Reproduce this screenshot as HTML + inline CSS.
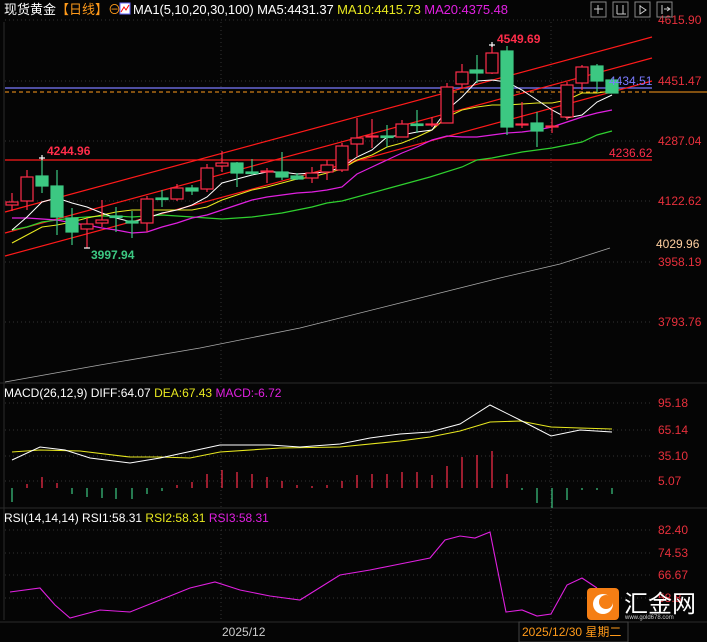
<!DOCTYPE html>
<html><head><meta charset="utf-8"><style>
body{margin:0;background:#000;width:707px;height:642px;overflow:hidden;font-family:"Liberation Sans","Noto Sans CJK SC",sans-serif}
svg{display:block}
text{font-family:"Liberation Sans","Noto Sans CJK SC",sans-serif}
</style></head><body>
<svg width="707" height="642" viewBox="0 0 707 642" xmlns="http://www.w3.org/2000/svg">
<rect width="707" height="642" fill="#050505"/>
<g stroke="#333" stroke-dasharray="1,3" stroke-width="1">
<line x1="5" y1="20" x2="652" y2="20"/><line x1="5" y1="81" x2="652" y2="81"/><line x1="5" y1="141" x2="652" y2="141"/><line x1="5" y1="201" x2="652" y2="201"/><line x1="5" y1="262" x2="652" y2="262"/><line x1="5" y1="322" x2="652" y2="322"/>
<line x1="5" y1="403" x2="652" y2="403"/><line x1="5" y1="430" x2="652" y2="430"/><line x1="5" y1="456" x2="652" y2="456"/><line x1="5" y1="481" x2="652" y2="481"/>
<line x1="5" y1="530" x2="652" y2="530"/><line x1="5" y1="553" x2="652" y2="553"/><line x1="5" y1="575" x2="652" y2="575"/><line x1="5" y1="598" x2="652" y2="598"/>
<line x1="221" y1="22" x2="221" y2="620"/><line x1="551" y1="22" x2="551" y2="620"/>
</g>
<g stroke="#2a2a2a"><line x1="0" y1="383" x2="707" y2="383"/><line x1="0" y1="508" x2="707" y2="508"/><line x1="0" y1="622" x2="707" y2="622"/><line x1="4" y1="22" x2="4" y2="620"/></g>
<line x1="5" y1="160" x2="652" y2="160" stroke="#ff1a1a" stroke-width="1.2"/>
<line x1="5" y1="88" x2="652" y2="88" stroke="#7a7aff" stroke-width="1.2"/>
<line x1="5" y1="92" x2="652" y2="92" stroke="#ff9a1a" stroke-dasharray="4,3"/>
<line x1="652" y1="92" x2="707" y2="92" stroke="#ff9a1a"/>
<g stroke="#ff1a1a" stroke-width="1.2">
<line x1="5" y1="212" x2="652" y2="37"/><line x1="5" y1="233" x2="652" y2="58"/><line x1="5" y1="256" x2="652" y2="81"/>
</g>
<polyline fill="none" stroke="#aaa" stroke-width="0.8" points="5,382 100,365 200,348 300,328 400,303 500,278 560,264 610,248"/>
<polyline fill="none" stroke="#2fd02f" stroke-width="1.2" points="12,230 27,227 42,222 57,220 72,218 87,217 102,216 116,216 132,217 147,216 162,215 177,216 192,217 207,218 222,219 237,218 252,217 267,215 282,213 297,210 312,207 327,203 342,201 386,189 430,177 462,167 477,160 492,158 507,155 522,152 537,150 552,148 567,145 582,142 597,135 612,131"/>
<polyline fill="none" stroke="#e020e0" stroke-width="1.2" points="12,218 27,218 42,219 57,220 72,223 87,225 102,228 116,230 132,233 147,232 162,227 177,223 192,218 207,215 222,210 237,205 252,200 267,197 282,195 297,193 312,192 327,190 342,187 357,174 372,167 387,160 402,153 417,147 432,140 447,136 462,137 477,137 492,135 507,133 522,132 537,130 552,127 567,122 582,117 597,113 612,110"/>
<polyline fill="none" stroke="#e8e820" stroke-width="1.1" points="12,243 27,235 42,227 57,225 72,222 87,218 102,215 116,212 132,210 147,210 162,210 177,210 192,210 207,207 222,200 237,195 252,190 267,187 282,183 297,179 312,177 327,173 342,169 357,160 372,155 387,147 402,143 417,137 432,130 447,117 462,110 477,107 492,105 507,105 522,104 537,103 552,103 567,100 582,93 597,93 612,91"/>
<polyline fill="none" stroke="#fff" stroke-width="1" points="12,230 27,217 42,202 57,198 72,203 87,207 102,213 116,218 132,222 147,218 162,213 177,210 192,205 207,197 222,183 237,179 252,175 267,172 282,172 297,174 312,173 327,172 342,167 357,157 372,150 387,137 402,135 417,132 432,130 447,110 462,97 477,81 492,80 507,82 522,90 537,100 552,110 567,118 582,115 597,102 612,95"/>
<g stroke-width="1.2">
<g stroke="#ff2d4a" fill="#050505">
<line x1="12" y1="193" x2="12" y2="211"/><rect x="6" y="202" width="12" height="3"/>
<line x1="27" y1="170" x2="27" y2="210"/><rect x="21" y="177" width="12" height="24"/>
<line x1="87" y1="218" x2="87" y2="248"/><rect x="81" y="224" width="12" height="5"/>
<line x1="102" y1="200" x2="102" y2="227"/><rect x="96" y="220" width="12" height="3"/>
<line x1="147" y1="196" x2="147" y2="232"/><rect x="141" y="199" width="12" height="24"/>
<line x1="177" y1="184" x2="177" y2="201"/><rect x="171" y="188" width="12" height="11"/>
<line x1="207" y1="164" x2="207" y2="192"/><rect x="201" y="168" width="12" height="21"/>
<line x1="222" y1="151" x2="222" y2="172"/><rect x="216" y="163" width="12" height="3"/>
<line x1="267" y1="168" x2="267" y2="183"/><rect x="261" y="171" width="12" height="1"/>
<line x1="312" y1="167" x2="312" y2="183"/><rect x="306" y="173" width="12" height="5"/>
<line x1="327" y1="160" x2="327" y2="180"/><rect x="321" y="165" width="12" height="7"/>
<line x1="342" y1="143" x2="342" y2="172"/><rect x="336" y="146" width="12" height="24"/>
<line x1="357" y1="118" x2="357" y2="157"/><rect x="351" y="138" width="12" height="6"/>
<line x1="372" y1="119" x2="372" y2="148"/><rect x="366" y="136" width="12" height="1"/>
<line x1="402" y1="120" x2="402" y2="137"/><rect x="396" y="124" width="12" height="13"/>
<line x1="432" y1="117" x2="432" y2="127"/><rect x="426" y="124" width="12" height="1"/>
<line x1="447" y1="83" x2="447" y2="123"/><rect x="441" y="87" width="12" height="36"/>
<line x1="462" y1="64" x2="462" y2="88"/><rect x="456" y="72" width="12" height="12"/>
<line x1="492" y1="45" x2="492" y2="74"/><rect x="486" y="53" width="12" height="20"/>
<line x1="522" y1="102" x2="522" y2="128"/><rect x="516" y="124" width="12" height="1"/>
<line x1="552" y1="109" x2="552" y2="133"/><rect x="546" y="126" width="12" height="1"/>
<line x1="567" y1="82" x2="567" y2="120"/><rect x="561" y="85" width="12" height="32"/>
<line x1="582" y1="65" x2="582" y2="90"/><rect x="576" y="67" width="12" height="16"/>
</g>
<g stroke="#3cc882" fill="#3cc882">
<line x1="42" y1="158" x2="42" y2="193"/><rect x="36" y="176" width="12" height="10"/>
<line x1="57" y1="170" x2="57" y2="235"/><rect x="51" y="186" width="12" height="31"/>
<line x1="72" y1="208" x2="72" y2="245"/><rect x="66" y="218" width="12" height="14"/>
<line x1="116" y1="207" x2="116" y2="232"/><rect x="110" y="216" width="12" height="1.5"/>
<line x1="132" y1="211" x2="132" y2="238"/><rect x="126" y="221" width="12" height="2"/>
<line x1="162" y1="190" x2="162" y2="207"/><rect x="156" y="198" width="12" height="1.5"/>
<line x1="192" y1="185" x2="192" y2="195"/><rect x="186" y="188" width="12" height="3"/>
<line x1="237" y1="162" x2="237" y2="187"/><rect x="231" y="163" width="12" height="10"/>
<line x1="252" y1="159" x2="252" y2="175"/><rect x="246" y="172" width="12" height="1.5"/>
<line x1="282" y1="152" x2="282" y2="180"/><rect x="276" y="172" width="12" height="5"/>
<line x1="297" y1="173" x2="297" y2="180"/><rect x="291" y="176" width="12" height="3"/>
<line x1="387" y1="125" x2="387" y2="147"/><rect x="381" y="136" width="12" height="1.5"/>
<line x1="417" y1="110" x2="417" y2="133"/><rect x="411" y="124" width="12" height="1.5"/>
<line x1="477" y1="55" x2="477" y2="83"/><rect x="470" y="70" width="13" height="3"/>
<line x1="507" y1="46" x2="507" y2="135"/><rect x="501" y="51" width="12" height="76"/>
<line x1="537" y1="112" x2="537" y2="147"/><rect x="531" y="123" width="12" height="8"/>
<line x1="597" y1="64" x2="597" y2="92"/><rect x="591" y="66" width="12" height="15"/>
<line x1="612" y1="78" x2="612" y2="93"/><rect x="606" y="80" width="12" height="13"/>
</g>
<g stroke="#fff"><line x1="39" y1="158" x2="45" y2="158"/><line x1="42" y1="155" x2="42" y2="160"/><line x1="84" y1="248" x2="90" y2="248"/><line x1="489" y1="45" x2="495" y2="45"/><line x1="492" y1="42" x2="492" y2="47"/></g>
</g>
<g font-size="12" font-weight="bold">
<text x="47" y="155" fill="#ff2d4a">4244.96</text>
<text x="497" y="43" fill="#ff2d4a">4549.69</text>
<text x="91" y="259" fill="#3cc882">3997.94</text>
<text x="609" y="157" fill="#ff2d4a" font-weight="normal">4236.62</text>
<text x="609" y="85" fill="#7a7aff" font-weight="normal">4434.51</text>
</g>
<g font-size="12" fill="#e8303c">
<text x="658" y="24">4615.90</text><text x="658" y="85">4451.47</text><text x="658" y="145">4287.04</text><text x="658" y="205">4122.62</text><text x="658" y="266">3958.19</text><text x="658" y="326">3793.76</text>
<text x="658" y="407">95.18</text><text x="658" y="434">65.14</text><text x="658" y="460">35.10</text><text x="658" y="485">5.07</text>
<text x="658" y="534">82.40</text><text x="658" y="557">74.53</text><text x="658" y="579">66.67</text><text x="658" y="602">58.8</text>
</g>
<text x="656" y="248" font-size="12" fill="#ffd0a0">4029.96</text>
<text x="4" y="14" font-size="13" fill="#fff">现货黄金<tspan fill="#ff9a1a">【日线】</tspan><tspan fill="#ff9a1a">⊖</tspan></text>
<rect x="120" y="3" width="10" height="11" fill="#fff" stroke="#66f"/><polyline points="121,12 124,7 126,10 129,5" fill="none" stroke="#f00"/>
<text x="133" y="14" font-size="13" fill="#fff" textLength="375">MA1(5,10,20,30,100)  MA5:4431.37  <tspan fill="#e8e820">MA10:4415.73</tspan>  <tspan fill="#e020e0">MA20:4375.48</tspan></text>
<g stroke="#888" fill="none"><rect x="591" y="2" width="15" height="15"/><rect x="613" y="2" width="15" height="15"/><rect x="635" y="2" width="15" height="15"/><rect x="657" y="2" width="15" height="15"/></g>
<g stroke="#ccc" fill="none"><path d="M598 5v9M594 9h9M623 5v9M617 5v9M617 14h9M640 5v9l6-4-6-4M662 5v9M664 9h6M667 7l3 2-3 2"/></g>
<!-- MACD -->
<text x="4" y="397" font-size="12" fill="#fff">MACD(26,12,9) DIFF:64.07  <tspan fill="#e8e820">DEA:67.43</tspan>  <tspan fill="#e020e0">MACD:-6.72</tspan></text>
<g stroke="#ff2d4a" stroke-width="1.2">
<line x1="27" y1="488" x2="27" y2="484"/><line x1="42" y1="488" x2="42" y2="477"/><line x1="57" y1="488" x2="57" y2="483"/><line x1="177" y1="488" x2="177" y2="485"/><line x1="192" y1="488" x2="192" y2="482"/><line x1="207" y1="488" x2="207" y2="474"/><line x1="222" y1="488" x2="222" y2="470"/><line x1="237" y1="488" x2="237" y2="472"/><line x1="252" y1="488" x2="252" y2="474"/><line x1="267" y1="488" x2="267" y2="477"/><line x1="282" y1="488" x2="282" y2="481"/><line x1="297" y1="488" x2="297" y2="485"/><line x1="312" y1="488" x2="312" y2="486"/><line x1="327" y1="488" x2="327" y2="485"/><line x1="342" y1="488" x2="342" y2="481"/><line x1="357" y1="488" x2="357" y2="475"/><line x1="372" y1="488" x2="372" y2="474"/><line x1="387" y1="488" x2="387" y2="474"/><line x1="402" y1="488" x2="402" y2="472"/><line x1="417" y1="488" x2="417" y2="472"/><line x1="432" y1="488" x2="432" y2="475"/><line x1="447" y1="488" x2="447" y2="466"/><line x1="462" y1="488" x2="462" y2="457"/><line x1="477" y1="488" x2="477" y2="455"/><line x1="492" y1="488" x2="492" y2="451"/><line x1="507" y1="488" x2="507" y2="474"/>
</g>
<g stroke="#3cc882" stroke-width="1.2"><line x1="12" y1="488" x2="12" y2="502"/><line x1="72" y1="488" x2="72" y2="494"/><line x1="87" y1="488" x2="87" y2="497"/><line x1="102" y1="488" x2="102" y2="498"/><line x1="116" y1="488" x2="116" y2="499"/><line x1="132" y1="488" x2="132" y2="499"/><line x1="147" y1="488" x2="147" y2="494"/><line x1="162" y1="488" x2="162" y2="491"/><line x1="522" y1="488" x2="522" y2="490"/><line x1="537" y1="488" x2="537" y2="503"/><line x1="552" y1="488" x2="552" y2="508"/><line x1="567" y1="488" x2="567" y2="500"/><line x1="582" y1="488" x2="582" y2="490"/><line x1="597" y1="488" x2="597" y2="490"/><line x1="612" y1="488" x2="612" y2="494"/></g>
<polyline fill="none" stroke="#e8e820" stroke-width="1.1" points="12,452 40,450 80,451 130,457 160,457 190,458 220,452 280,448 340,447 400,441 430,437 460,431 490,422 520,421 551,427 580,428 612,429"/>
<polyline fill="none" stroke="#fff" stroke-width="1" points="12,460 40,447 65,450 90,458 130,463 160,458 220,445 270,445 300,447 340,444 370,438 400,434 430,432 460,424 490,405 520,420 551,436 580,430 612,432"/>
<!-- RSI -->
<text x="4" y="522" font-size="12" fill="#fff">RSI(14,14,14) RSI1:58.31  <tspan fill="#e8e820">RSI2:58.31</tspan>  <tspan fill="#e020e0">RSI3:58.31</tspan></text>
<polyline fill="none" stroke="#e020e0" stroke-width="1.1" points="10,592 40,588 55,605 70,618 100,610 130,612 160,600 190,588 215,582 240,590 270,596 300,600 340,575 370,570 400,564 430,558 445,540 460,536 475,538 490,532 506,612 522,610 537,616 551,614 567,585 582,578 597,588"/>
<rect x="587" y="588" width="32" height="32" rx="4" fill="#f57e14"/>
<circle cx="603" cy="604" r="10" fill="#fff"/><circle cx="606" cy="602" r="7" fill="#f57e14"/>
<text x="624" y="612" font-size="24" fill="#fff" font-family="Noto Sans CJK SC,sans-serif">汇金网</text>
<text x="625" y="619" font-size="6" fill="#ccc">www.gold678.com</text>
<text x="222" y="636" font-size="12" fill="#ccc">2025/12</text>
<rect x="519" y="622" width="109" height="20" fill="#050505" stroke="#444"/>
<text x="522" y="636" font-size="12" fill="#ff9a1a">2025/12/30 星期二</text>
</svg>
</body></html>
